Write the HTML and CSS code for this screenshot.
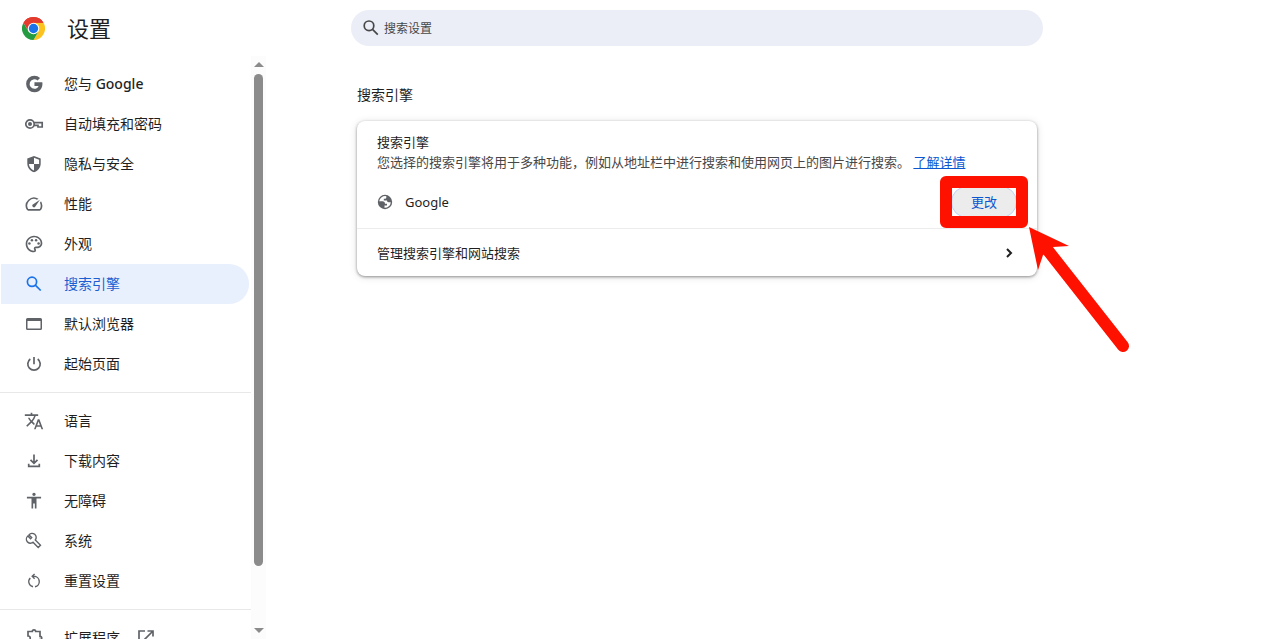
FILE: index.html
```html
<!DOCTYPE html>
<html lang="zh-CN">
<head>
    <meta charset="UTF-8">
    <meta name="viewport" content="width=device-width, initial-scale=1.0">
    <title>设置</title>
    <link rel="stylesheet" href="styles.css">
</head>
<body>
    <div class="sidebar">
        <div class="brand">
            <svg class="logo" viewBox="0 0 48 48" aria-hidden="true">
                <path fill="#e33b2e" d="M24 24 L3.2 12 A24 24 0 0 1 44.8 12 Z"/>
                <path fill="#fcc31e" d="M24 24 L24 12 H44.8 A24 24 0 0 1 24 48 L34.4 30 Z"/>
                <path fill="#249a41" d="M24 48 A24 24 0 0 1 3.2 12 L13.6 30 L24 36 L34.4 30 Z"/>
                <path fill="#e33b2e" d="M24 12 H44.8 A24 24 0 0 0 3.2 12 L13.6 30 Z"/>
                <circle cx="24" cy="24" r="12" fill="#fff"/>
                <circle cx="24" cy="24" r="9.7" fill="#1a73e8"/>
            </svg>
            <h1>设置</h1>
        </div>

        <div class="menuArea">
            <nav class="menu">
                <a href="#people">
                    <svg viewBox="0 0 24 24"><path d="M12.545 9.900v4.400h4.900c-.712 2-2.500 3.400-4.900 3.400a5.700 5.700 0 1 1 3.700-10l3.035-3.035A9.970 9.970 0 0 0 12.545 2 10 10 0 1 0 12.545 22c8.396 0 10.249-7.850 9.426-12.100z"/></svg>
                    <span>您与 <b>Google</b></span>
                </a>
                <a href="#autofill">
                    <svg viewBox="0 0 20 20"><circle class="line" cx="6" cy="10" r="4.2"/><circle cx="6" cy="10" r="2"/><path class="line" d="M10 8.7H18.2V13H14V11.4H10"/></svg>
                    <span>自动填充和密码</span>
                </a>
                <a href="#privacy">
                    <svg viewBox="0 0 20 20"><path fill-rule="evenodd" d="M10 2 3.300 4.500V9.500C3.300 13.700 6.100 17.100 10 18.200 13.900 17.100 16.700 13.700 16.700 9.500V4.500zM10 3.800 15.100 5.700V10H10zM10 10V16.500C7.200 15.600 5.200 13.100 4.900 10z"/></svg>
                    <span>隐私与安全</span>
                </a>
                <a href="#performance">
                    <svg viewBox="0 0 24 24"><path d="M20.38 8.57l-1.23 1.85a8 8 0 0 1-.22 7.58H5.07A8 8 0 0 1 15.58 6.85l1.85-1.23A10 10 0 0 0 3.35 19a2 2 0 0 0 1.72 1h13.85a2 2 0 0 0 1.74-1 10 10 0 0 0-.27-10.44zm-9.79 6.84a2 2 0 0 0 2.83 0l5.66-8.49-8.49 5.66a2 2 0 0 0 0 2.83z"/></svg>
                    <span>性能</span>
                </a>
                <a href="#appearance">
                    <svg viewBox="0 0 24 24"><path d="M12 22C6.49 22 2 17.51 2 12S6.49 2 12 2s10 4.04 10 9c0 3.31-2.69 6-6 6h-1.77c-.28 0-.5.22-.5.5 0 .12.05.23.13.33.41.47.64 1.06.64 1.67A2.5 2.5 0 0 1 12 22zm0-18c-4.41 0-8 3.59-8 8s3.59 8 8 8c.28 0 .5-.22.5-.5a.54.54 0 0 0-.14-.35c-.41-.46-.63-1.05-.63-1.65a2.5 2.5 0 0 1 2.5-2.5H16c2.21 0 4-1.79 4-4 0-3.86-3.59-7-8-7z"/><circle cx="6.5" cy="11.5" r="1.5"/><circle cx="9.5" cy="7.5" r="1.5"/><circle cx="14.5" cy="7.5" r="1.5"/><circle cx="17.5" cy="11.5" r="1.5"/></svg>
                    <span>外观</span>
                </a>
                <a href="#search" class="selected" aria-current="page">
                    <svg viewBox="0 0 20 20"><circle class="line" cx="8" cy="7.8" r="4.600"/><path class="line" d="M11.300 11.100 16.700 16.500"/></svg>
                    <span>搜索引擎</span>
                </a>
                <a href="#defaultBrowser">
                    <svg viewBox="0 0 20 20"><path fill-rule="evenodd" d="M3.500 4h13A1.500 1.500 0 0 1 18 5.500v9a1.500 1.500 0 0 1-1.500 1.500h-13A1.500 1.500 0 0 1 2 14.500v-9A1.500 1.500 0 0 1 3.500 4zm0 3v7.500h13V7z"/></svg>
                    <span>默认浏览器</span>
                </a>
                <a href="#onStartup">
                    <svg viewBox="0 0 20 20"><path class="line" d="M10 3V10.300M6.300 5A6.200 6.200 0 1 0 13.700 5"/></svg>
                    <span>起始页面</span>
                </a>
                <hr>
                <a href="#languages">
                    <svg viewBox="0 0 24 24"><path d="M12.870 15.070l-2.540-2.510.03-.03A17.520 17.520 0 0 0 14.070 6H17V4h-7V2H8v2H1v1.990h11.170C11.500 7.920 10.440 9.750 9 11.350 8.070 10.320 7.300 9.190 6.690 8h-2c.73 1.630 1.730 3.170 2.980 4.560l-5.090 5.020L4 19l5-5 3.110 3.110.76-2.040zM18.500 10h-2L12 22h2l1.120-3h4.750L21 22h2l-4.500-12zm-2.620 7l1.620-4.330L19.120 17h-3.240z"/></svg>
                    <span>语言</span>
                </a>
                <a href="#downloads">
                    <svg viewBox="0 0 20 20"><path class="line" d="M10 3.500V12M6.500 8.800 10 12.300 13.500 8.800M4.700 12.800V15.300H15.300V12.800"/></svg>
                    <span>下载内容</span>
                </a>
                <a href="#accessibility">
                    <svg viewBox="0 0 24 24"><path d="M12 2c1.100 0 2 .9 2 2s-.9 2-2 2-2-.9-2-2 .9-2 2-2zm8.500 7H15v12h-2v-6h-2v6H9V9H3.500V7h17z"/></svg>
                    <span>无障碍</span>
                </a>
                <a href="#system">
                    <svg viewBox="0 0 20 20"><path class="line wrench" d="M5 3.900A4 4 0 0 1 11.300 9L16.500 14.200 14.200 16.500 9 11.300A4 4 0 0 1 3.900 5L6.600 7.700 7.700 6.600z"/></svg>
                    <span>系统</span>
                </a>
                <a href="#reset">
                    <svg viewBox="0 0 20 20"><path class="line reset" d="M9 15.800A5.300 5.300 0 0 1 6.300 6.900M11 15.800A5.300 5.300 0 0 0 10 5.300H8.200M10.600 2.900 8.200 5.300 10.600 7.700"/></svg>
                    <span>重置设置</span>
                </a>
                <hr>
                <a href="#extensions">
                    <svg viewBox="0 0 20 20"><path class="line" d="M4 3.500H8.300A1.700 1.700 0 0 1 11.700 3.500H16V8.300A1.700 1.700 0 0 1 16 11.700V17H4V12.500A2 2 0 0 0 4 8z"/></svg>
                    <span>扩展程序</span>
                    <svg class="launch" viewBox="0 0 20 20"><path class="line" d="M9 3H3V17H17V11M11.500 3H17V8.500M17 3 7.500 12.500"/></svg>
                </a>
            </nav>
            <div class="scrollbar" aria-hidden="true">
                <div class="arrowUp"></div>
                <div class="track"><div class="thumb"></div></div>
                <div class="arrowDown"></div>
            </div>
        </div>
    </div>

    <main>
        <label class="searchBar">
            <svg viewBox="0 0 20 20" aria-hidden="true"><circle class="line" cx="8" cy="7.800" r="4.800"/><path class="line" d="M11.500 11.300 16.800 16.600"/></svg>
            <input type="search" placeholder="搜索设置" aria-label="搜索设置">
        </label>

        <section>
            <h2>搜索引擎</h2>
            <div class="card">
                <div class="engine">
                    <h3>搜索引擎</h3>
                    <p>您选择的搜索引擎将用于多种功能，例如从地址栏中进行搜索和使用网页上的图片进行搜索。 <a href="#learnMore">了解详情</a></p>
                    <div class="engineRow">
                        <svg class="globe" viewBox="0 0 16 16" aria-hidden="true">
                            <circle cx="8" cy="8" r="7.200"/>
                            <path fill="#fff" d="M9.300 2.200A6 6 0 0 0 2.200 7.300H5.500C7.200 7.300 8 8.300 8 9.700H10V11.500H7.500V13.800A6 6 0 0 0 13.800 8.200H11.600C10.600 8.200 10 7.600 10 6.500H6.800V4.700H8.300C9 4.700 9.300 4.200 9.300 3.500z"/>
                        </svg>
                        <span>Google</span>
                        <div class="change">
                            <button type="button">更改</button>
                            <div class="frame"></div>
                            <svg class="pointer" viewBox="0 0 102 128" aria-hidden="true">
                                <path d="M0 0 40 19 24 20 14 28 9 43z"/>
                                <path class="shaft" d="M17 21 94 119"/>
                            </svg>
                        </div>
                    </div>
                </div>
                <a class="manage" href="#searchEngines">
                    <span>管理搜索引擎和网站搜索</span>
                    <svg viewBox="0 0 16 16" aria-hidden="true"><path d="M6 4 10 8 6 12"/></svg>
                </a>
            </div>
        </section>
    </main>
</body>
</html>
```
FILE: styles.css
```css
* {
    box-sizing: border-box;
}

body {
    display: grid;
    grid-template-columns: 266px 1fr;
    height: 100vh;
    margin: 0;
    overflow: hidden;
    background-color: #fff;
    color: #1f1f1f;
    font-family: "Noto Sans", "Noto Sans CJK SC", sans-serif;
    font-size: 13px;
    line-height: 20px;
}

h1, h2, h3, p {
    margin: 0;
    font-weight: 400;
}

.line {
    fill: none;
    stroke: currentColor;
    stroke-width: 1.7;
}

/* Sidebar */
.sidebar {
    display: flex;
    flex-direction: column;
    min-height: 0;
}

.brand {
    display: flex;
    align-items: center;
    gap: 22px;
    flex: none;
    height: 56px;
    padding-left: 22px;
}

.brand h1 {
    font-size: 22px;
    line-height: 32px;
}

.logo {
    width: 23px;
    height: 23px;
}

.menuArea {
    display: flex;
    flex: 1;
    min-height: 0;
}

.menu {
    flex: 1;
    padding-top: 8px;
    overflow: hidden;
}

.menu a {
    display: flex;
    align-items: center;
    gap: 20px;
    height: 40px;
    margin: 0 2px 0 1px;
    padding-left: 23px;
    border-radius: 0 20px 20px 0;
    color: #1f1f1f;
    font-size: 14px;
    text-decoration: none;
}

.menu b {
    font-weight: 500;
}

.menu svg {
    width: 20px;
    height: 20px;
    color: #5f6368;
    fill: currentColor;
}

.menu .wrench,
.menu .reset {
    stroke-width: 1.4;
}

.menu .launch {
    margin-left: -4px;
}

.menu .selected {
    background-color: #e8effd;
    color: #1b5fd0;
}

.menu .selected svg {
    color: #1a73e8;
}

.menu hr {
    height: 1px;
    margin: 8px 0;
    border: none;
    background-color: #e8e8e8;
}

.scrollbar {
    display: flex;
    flex-direction: column;
    align-items: center;
    width: 15px;
    padding: 6px 0;
    background-color: #fcfcfc;
}

.arrowUp,
.arrowDown {
    border: 5px solid transparent;
}

.arrowUp {
    border-top: none;
    border-bottom-color: #8b8b8b;
}

.arrowDown {
    border-bottom: none;
    border-top-color: #8b8b8b;
}

.track {
    flex: 1;
    margin: 7px 0;
}

.thumb {
    width: 9px;
    height: 90%;
    border-radius: 5px;
    background-color: #8b8b8b;
}

/* Main column */
main {
    max-width: 777px;
    padding: 10px 0 0 85px;
}

.searchBar {
    display: flex;
    align-items: center;
    gap: 3px;
    height: 36px;
    padding: 0 10px;
    border-radius: 18px;
    background-color: #ebeef7;
}

.searchBar svg {
    width: 20px;
    height: 20px;
    color: #474747;
}

.searchBar input {
    flex: 1;
    padding: 2px 0 0;
    border: none;
    outline: none;
    background: none;
    font: inherit;
    font-size: 12px;
}

.searchBar input::placeholder {
    color: #474747;
}

section {
    padding: 38px 6px 0;
}

h2 {
    margin-bottom: 15px;
    font-size: 14px;
    line-height: 22px;
}

.card {
    border-radius: 8px;
    box-shadow: 0 1px 3px rgba(0, 0, 0, 0.4), 0 1px 8px rgba(0, 0, 0, 0.12);
}

.engine {
    padding: 11px 20px 10px;
    border-bottom: 1px solid #ececec;
}

h3 {
    font-size: 13px;
}

.engine p {
    color: #474747;
}

.engine p a {
    color: #0b57d0;
}

.engineRow {
    display: flex;
    align-items: center;
    gap: 12px;
    margin-top: 14px;
}

.globe {
    width: 16px;
    height: 16px;
    fill: #5f6368;
}

.change {
    position: relative;
    margin-left: auto;
}

.change button {
    display: block;
    height: 32px;
    padding: 0 19px;
    border: 1px solid #c0d3f8;
    border-radius: 16px;
    background-color: #ececec;
    color: #0b57d0;
    font: inherit;
}

/* Red frame and arrow over the button */
.frame {
    position: absolute;
    inset: -10px -11px;
    border: 12px solid #ff1100;
    border-radius: 6px;
    pointer-events: none;
}

.pointer {
    position: absolute;
    top: 41px;
    left: 78px;
    width: 102px;
    height: 128px;
    fill: #ff1100;
    pointer-events: none;
}

.shaft {
    stroke: #ff1100;
    stroke-width: 12;
    stroke-linecap: round;
}

.manage {
    display: flex;
    align-items: center;
    justify-content: space-between;
    height: 47px;
    padding: 0 20px;
    color: #1f1f1f;
    text-decoration: none;
}

.manage svg {
    width: 16px;
    height: 16px;
    fill: none;
    stroke: #1f1f1f;
    stroke-width: 2;
}
```
